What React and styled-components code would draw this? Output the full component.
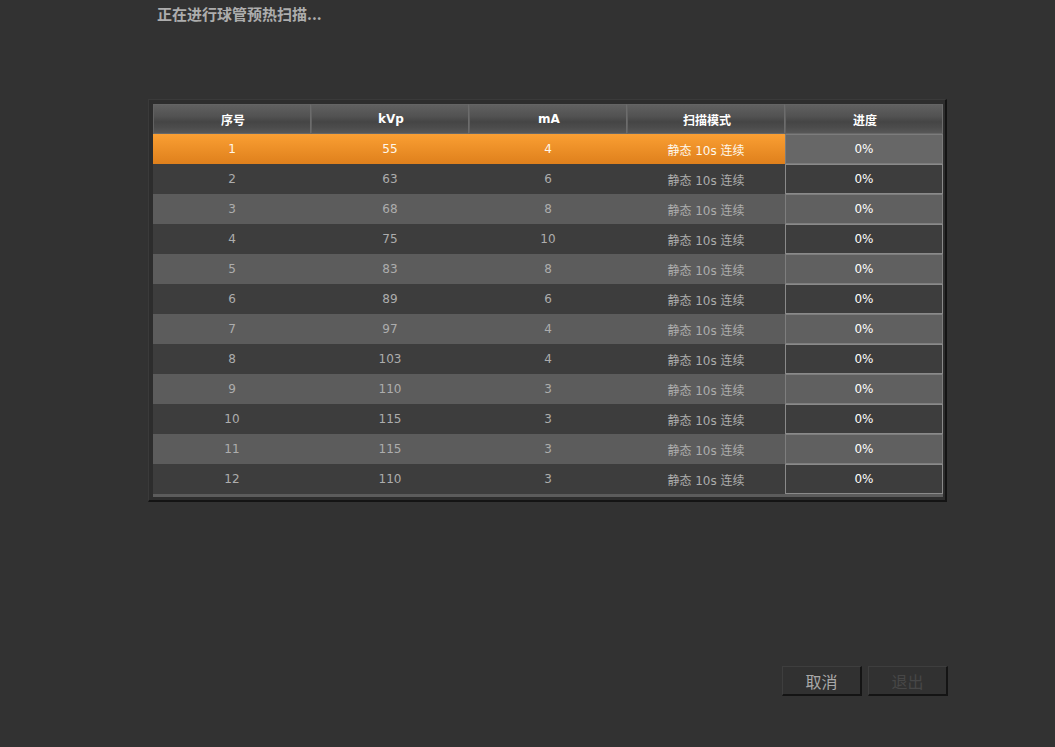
import React from "react";
import styled, { createGlobalStyle } from "styled-components";

const Global = createGlobalStyle`
  html, body { margin: 0; padding: 0; background: #323232; }
  body { font-family: "DejaVu Sans", "Noto Sans CJK SC", sans-serif; }
  #root { min-height: 747px; }
`;

const Page = styled.div`
  width: 800px;
  margin-left: 148px;
  display: flex;
  flex-direction: column;
`;

const Title = styled.div`
  padding: 3px 0 0 9px;
  height: 22px;
  line-height: 22px;
  font-size: 15px;
  font-weight: bold;
  color: #adadad;
  font-family: "Noto Sans CJK SC", sans-serif;
`;

const Frame = styled.div`
  margin-top: 74px;
  width: 799px;
  box-sizing: border-box;
  background: #2d2d2d;
  border-top: 1px solid #3a3a3a;
  border-left: 1px solid #3a3a3a;
  border-right: 2px solid #141414;
  border-bottom: 2px solid #141414;
  padding: 4px 2px 3px 4px;
`;

const Table = styled.div`
  width: 790px;
  display: flex;
  flex-direction: column;
  background: #5c5c5c;
  padding-bottom: 3px;
`;

const HeaderRow = styled.div`
  display: grid;
  grid-template-columns: repeat(5, 158px);
  height: 30px;
`;

const HeaderCell = styled.div`
  box-sizing: border-box;
  display: flex;
  align-items: center;
  justify-content: center;
  padding-left: 2px;
  background: linear-gradient(#606060 0%, #525252 40%, #454545 60%, #4c4c4c 80%, #575757 100%);
  border-top: 1px solid #646464;
  border-bottom: 1px solid #686868;
  border-left: 1px solid #626262;
  border-right: 1px solid #6c6c6c;
  color: #ffffff;
  font-size: 12px;
  font-weight: bold;
`;

const Row = styled.div`
  display: grid;
  grid-template-columns: repeat(5, 158px);
  height: 30px;
  background: ${(p) =>
    p.$variant === "sel"
      ? "linear-gradient(#fa9f33, #df801c)"
      : p.$variant === "dark"
      ? "#3d3d3d"
      : "#5c5c5c"};
`;

const Cell = styled.div`
  display: flex;
  align-items: center;
  justify-content: center;
  font-size: 12px;
  color: ${(p) => (p.$sel ? "#fff8ec" : "#adadad")};
`;

const ProgressCell = styled.div`
  box-sizing: border-box;
  display: flex;
  align-items: center;
  justify-content: center;
  font-size: 12px;
  color: #ffffff;
  background: ${(p) =>
    p.$variant === "sel" ? "#676767" : p.$variant === "dark" ? "#3d3d3d" : "#606060"};
  border: 1px solid
    ${(p) => (p.$variant === "sel" ? "#7c7c7c" : p.$variant === "dark" ? "#8a8a8a" : "#7e7e7e")};
`;

const ButtonBar = styled.div`
  margin-top: 164px;
  display: flex;
  justify-content: flex-end;
  gap: 6px;
`;

const Button = styled.button`
  width: 80px;
  height: 30px;
  box-sizing: border-box;
  padding: 0;
  background: #313131;
  border-top: 1px solid #3e3e3e;
  border-left: 1px solid #3e3e3e;
  border-right: 2px solid #141414;
  border-bottom: 2px solid #141414;
  font-family: "Noto Sans CJK SC", sans-serif;
  font-size: 16px;
  color: ${(p) => (p.disabled ? "#474747" : "#a9a9a9")};
`;

const data = [
  [1, 55, 4],
  [2, 63, 6],
  [3, 68, 8],
  [4, 75, 10],
  [5, 83, 8],
  [6, 89, 6],
  [7, 97, 4],
  [8, 103, 4],
  [9, 110, 3],
  [10, 115, 3],
  [11, 115, 3],
  [12, 110, 3],
];

const headers = ["序号", "kVp", "mA", "扫描模式", "进度"];

export default function App() {
  return (
    <>
      <Global />
      <Page>
        <Title>正在进行球管预热扫描...</Title>
        <Frame>
          <Table>
            <HeaderRow>
              {headers.map((h) => (
                <HeaderCell key={h}>{h}</HeaderCell>
              ))}
            </HeaderRow>
            {data.map((r, i) => {
              const variant = i === 0 ? "sel" : i % 2 === 1 ? "dark" : "light";
              const sel = variant === "sel";
              return (
                <Row key={r[0]} $variant={variant}>
                  <Cell $sel={sel}>{r[0]}</Cell>
                  <Cell $sel={sel}>{r[1]}</Cell>
                  <Cell $sel={sel}>{r[2]}</Cell>
                  <Cell $sel={sel}>静态 10s 连续</Cell>
                  <ProgressCell $variant={variant}>0%</ProgressCell>
                </Row>
              );
            })}
          </Table>
        </Frame>
        <ButtonBar>
          <Button>取消</Button>
          <Button disabled>退出</Button>
        </ButtonBar>
      </Page>
    </>
  );
}
